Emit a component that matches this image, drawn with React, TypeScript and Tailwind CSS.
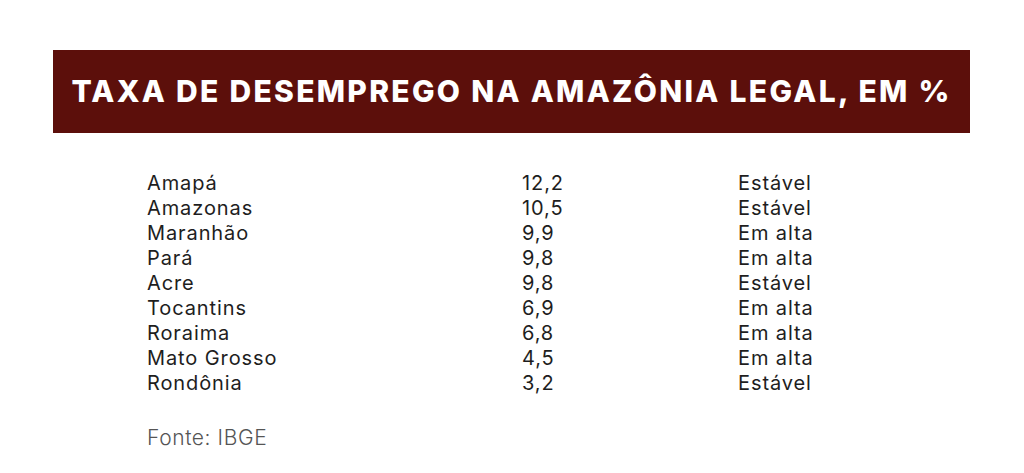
const rows = [
  ["Amapá", "12,2", "Estável"],
  ["Amazonas", "10,5", "Estável"],
  ["Maranhão", "9,9", "Em alta"],
  ["Pará", "9,8", "Em alta"],
  ["Acre", "9,8", "Estável"],
  ["Tocantins", "6,9", "Em alta"],
  ["Roraima", "6,8", "Em alta"],
  ["Mato Grosso", "4,5", "Em alta"],
  ["Rondônia", "3,2", "Estável"],
];

export default function App() {
  return (
    <div className="w-[1024px] h-[473px] bg-white pt-[50px] font-['Inter',sans-serif]">
      {/* faixa do título */}
      <div className="ml-[53px] w-[917px] h-[83px] bg-[#5c0f0b] flex items-center justify-center">
        <h1 className="text-white text-[30px] font-extrabold tracking-[2.3px] uppercase">
          TAXA DE DESEMPREGO NA AMAZÔNIA LEGAL, EM %
        </h1>
      </div>

      {/* tabela */}
      <div className="ml-[147px] mt-[38px] text-[20px] tracking-[0.9px] text-[#1e1e1e] leading-[25px]">
        {rows.map(([estado, taxa, status]) => (
          <div key={estado} className="flex">
            <span className="w-[375px]">{estado}</span>
            <span className="w-[216px]">{taxa}</span>
            <span>{status}</span>
          </div>
        ))}
      </div>

      <p className="ml-[147px] mt-[26px] text-[21px] font-light tracking-[0.6px] text-[#555555]">Fonte: IBGE</p>
    </div>
  );
}
